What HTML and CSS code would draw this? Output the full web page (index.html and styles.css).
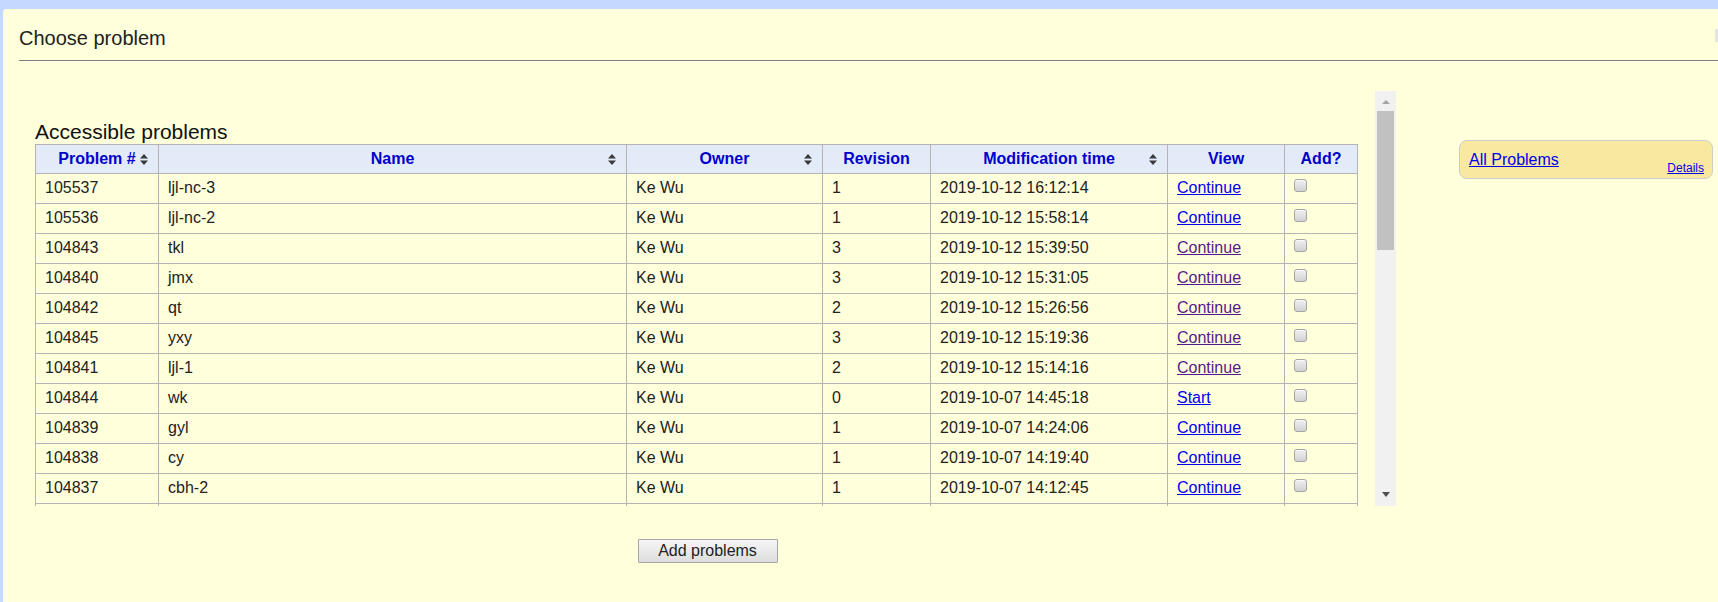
FILE: index.html
```html
<!DOCTYPE html>
<html>
<head>
<meta charset="utf-8">
<title>Choose problem</title>
<link rel="stylesheet" href="styles.css">
</head>
<body>
<div class="panel">
  <div class="title-row">
    <div class="title">Choose problem</div>
    <span class="close-btn"></span>
  </div>
  <div class="content">
    <div class="main">
      <div class="scroll-box">
        <div class="scroll-content">
          <div class="heading">Accessible problems</div>
          <table class="problems">
            <colgroup>
              <col class="c-num"><col class="c-name"><col class="c-owner"><col class="c-rev"><col class="c-time"><col class="c-view"><col class="c-add">
            </colgroup>
            <thead>
              <tr>
                <th>Problem #<span class="sort"><svg width="8" height="11" viewBox="0 0 8 11"><path d="M0 4.5L4 0L8 4.5Z M0 6.5L4 11L8 6.5Z" fill="#3a3a3a"/></svg></span></th>
                <th>Name<span class="sort"><svg width="8" height="11" viewBox="0 0 8 11"><path d="M0 4.5L4 0L8 4.5Z M0 6.5L4 11L8 6.5Z" fill="#3a3a3a"/></svg></span></th>
                <th>Owner<span class="sort"><svg width="8" height="11" viewBox="0 0 8 11"><path d="M0 4.5L4 0L8 4.5Z M0 6.5L4 11L8 6.5Z" fill="#3a3a3a"/></svg></span></th>
                <th>Revision</th>
                <th>Modification time<span class="sort"><svg width="8" height="11" viewBox="0 0 8 11"><path d="M0 4.5L4 0L8 4.5Z M0 6.5L4 11L8 6.5Z" fill="#3a3a3a"/></svg></span></th>
                <th>View</th>
                <th>Add?</th>
              </tr>
            </thead>
            <tbody>
              <tr><td>105537</td><td>ljl-nc-3</td><td>Ke Wu</td><td>1</td><td>2019-10-12 16:12:14</td><td><a href="#" class="lnk">Continue</a></td><td><input type="checkbox" class="cb"></td></tr>
              <tr><td>105536</td><td>ljl-nc-2</td><td>Ke Wu</td><td>1</td><td>2019-10-12 15:58:14</td><td><a href="#" class="lnk">Continue</a></td><td><input type="checkbox" class="cb"></td></tr>
              <tr><td>104843</td><td>tkl</td><td>Ke Wu</td><td>3</td><td>2019-10-12 15:39:50</td><td><a href="#" class="lnk visited">Continue</a></td><td><input type="checkbox" class="cb"></td></tr>
              <tr><td>104840</td><td>jmx</td><td>Ke Wu</td><td>3</td><td>2019-10-12 15:31:05</td><td><a href="#" class="lnk visited">Continue</a></td><td><input type="checkbox" class="cb"></td></tr>
              <tr><td>104842</td><td>qt</td><td>Ke Wu</td><td>2</td><td>2019-10-12 15:26:56</td><td><a href="#" class="lnk visited">Continue</a></td><td><input type="checkbox" class="cb"></td></tr>
              <tr><td>104845</td><td>yxy</td><td>Ke Wu</td><td>3</td><td>2019-10-12 15:19:36</td><td><a href="#" class="lnk visited">Continue</a></td><td><input type="checkbox" class="cb"></td></tr>
              <tr><td>104841</td><td>ljl-1</td><td>Ke Wu</td><td>2</td><td>2019-10-12 15:14:16</td><td><a href="#" class="lnk visited">Continue</a></td><td><input type="checkbox" class="cb"></td></tr>
              <tr><td>104844</td><td>wk</td><td>Ke Wu</td><td>0</td><td>2019-10-07 14:45:18</td><td><a href="#" class="lnk">Start</a></td><td><input type="checkbox" class="cb"></td></tr>
              <tr><td>104839</td><td>gyl</td><td>Ke Wu</td><td>1</td><td>2019-10-07 14:24:06</td><td><a href="#" class="lnk">Continue</a></td><td><input type="checkbox" class="cb"></td></tr>
              <tr><td>104838</td><td>cy</td><td>Ke Wu</td><td>1</td><td>2019-10-07 14:19:40</td><td><a href="#" class="lnk">Continue</a></td><td><input type="checkbox" class="cb"></td></tr>
              <tr><td>104837</td><td>cbh-2</td><td>Ke Wu</td><td>1</td><td>2019-10-07 14:12:45</td><td><a href="#" class="lnk">Continue</a></td><td><input type="checkbox" class="cb"></td></tr>
              <tr><td>&nbsp;</td><td>&nbsp;</td><td>&nbsp;</td><td>&nbsp;</td><td>&nbsp;</td><td>&nbsp;</td><td>&nbsp;</td></tr>
            </tbody>
          </table>
        </div>
        <div class="scrollbar">
          <div class="sb-btn sb-top"><span class="arr-up"></span></div>
          <div class="sb-thumb"></div>
          <div class="sb-fill"></div>
          <div class="sb-btn sb-bottom"><span class="arr-down"></span></div>
        </div>
      </div>
      <div class="actions">
        <button class="add-btn" type="button">Add problems</button>
      </div>
    </div>
    <div class="sidebar">
      <div class="set-box">
        <a href="#" class="set-link">All Problems</a>
        <a href="#" class="details-link">Details</a>
      </div>
    </div>
  </div>
</div>
</body>
</html>
```
FILE: styles.css
```css
html, body {
  margin: 0;
  padding: 0;
}
body {
  background: #c3d9ff;
  overflow: hidden;
  font-family: "Liberation Sans", Arial, sans-serif;
  color: #222;
}
.panel {
  margin: 9px 0 0 3px;
  background: #ffffdc;
  border-top-left-radius: 4px;
  height: 593px;
  padding: 18px 0 0 16px;
  box-sizing: border-box;
}
.title-row {
  display: flex;
  justify-content: space-between;
  align-items: flex-start;
  border-bottom: 1px solid #7f7f7f;
  padding-bottom: 10px;
}
.title {
  font-size: 20px;
  line-height: 23px;
  color: #222;
}
.close-btn {
  display: block;
  width: 3px;
  height: 13px;
  margin-top: 2px;
  background: #e4e4e4;
}
.content {
  display: flex;
  margin-top: 30px;
}
.main {
  width: 1377px;
  flex: none;
}
.scroll-box {
  display: flex;
  height: 415px;
}
.scroll-content {
  width: 1356px;
  height: 415px;
  overflow: hidden;
  padding: 29px 0 0 16px;
  box-sizing: border-box;
}
.heading {
  font-size: 21px;
  line-height: 23px;
  color: #111;
  margin-bottom: 1px;
}
.problems {
  border-collapse: collapse;
  table-layout: fixed;
  width: 1322px;
  font-size: 16px;
}
.c-num { width: 123px; }
.c-name { width: 468px; }
.c-owner { width: 196px; }
.c-rev { width: 108px; }
.c-time { width: 237px; }
.c-view { width: 117px; }
.c-add { width: 73px; }
.problems th, .problems td {
  border: 1px solid #b4b4b4;
  line-height: 19px;
  white-space: nowrap;
  overflow: hidden;
}
.problems th {
  position: relative;
  background: #e3eaf8;
  color: #0000cc;
  font-weight: bold;
  text-align: center;
  padding: 4px 9px 5px;
}
.problems td {
  padding: 4px 9px 6px;
  text-align: left;
  color: #222;
  vertical-align: top;
}
.sort {
  position: absolute;
  right: 10px;
  top: 9px;
  width: 8px;
  height: 11px;
  line-height: 0;
}
.lnk {
  color: #0000ee;
  text-decoration: underline;
}
.lnk.visited {
  color: #551a8b;
}
.cb {
  appearance: none;
  -webkit-appearance: none;
  display: inline-block;
  vertical-align: top;
  margin: 1px 0 0;
  width: 13px;
  height: 13px;
  border: 1px solid #a5a5a5;
  border-radius: 3px;
  background: linear-gradient(#f0f0f0, #d2d2d2);
  box-shadow: inset 0 1px 0 #fafafa;
  box-sizing: border-box;
}
.scrollbar {
  width: 21px;
  height: 415px;
  background: #f1f1f1;
  display: flex;
  flex-direction: column;
  align-items: center;
  flex: none;
}
.sb-btn {
  height: 20px;
  width: 21px;
  display: flex;
  justify-content: center;
  align-items: flex-start;
  box-sizing: border-box;
  flex: none;
}
.sb-top { padding-top: 9px; }
.sb-bottom { padding-top: 6px; }
.arr-up {
  width: 0;
  height: 0;
  border-left: 4px solid transparent;
  border-right: 4px solid transparent;
  border-bottom: 4px solid #a3a3a3;
}
.arr-down {
  width: 0;
  height: 0;
  border-left: 4px solid transparent;
  border-right: 4px solid transparent;
  border-top: 5px solid #505050;
}
.sb-thumb {
  width: 17px;
  height: 139px;
  background: #c1c1c1;
  flex: none;
}
.sb-fill {
  flex: 1;
}
.actions {
  display: flex;
  justify-content: center;
  margin-top: 33px;
}
.add-btn {
  width: 140px;
  height: 24px;
  padding: 0;
  font-family: "Liberation Sans", Arial, sans-serif;
  font-size: 16px;
  color: #222;
  border: 1px solid #a6a6a6;
  border-radius: 1px;
  background: linear-gradient(#f6f6f6, #dddddd);
}
.sidebar {
  margin-left: 63px;
  margin-top: 49px;
  width: 254px;
  flex: none;
}
.set-box {
  display: flex;
  justify-content: space-between;
  align-items: flex-start;
  height: 39px;
  box-sizing: border-box;
  padding: 10px 8px 0 9px;
  background: #f8e8a0;
  border: 1px solid #cccccc;
  border-radius: 8px;
}
.set-link {
  font-size: 16px;
  line-height: 18px;
  color: #0000ee;
  text-decoration: underline;
}
.details-link {
  font-size: 12px;
  line-height: 14px;
  margin-top: 10px;
  color: #0000ee;
  text-decoration: underline;
}
```
